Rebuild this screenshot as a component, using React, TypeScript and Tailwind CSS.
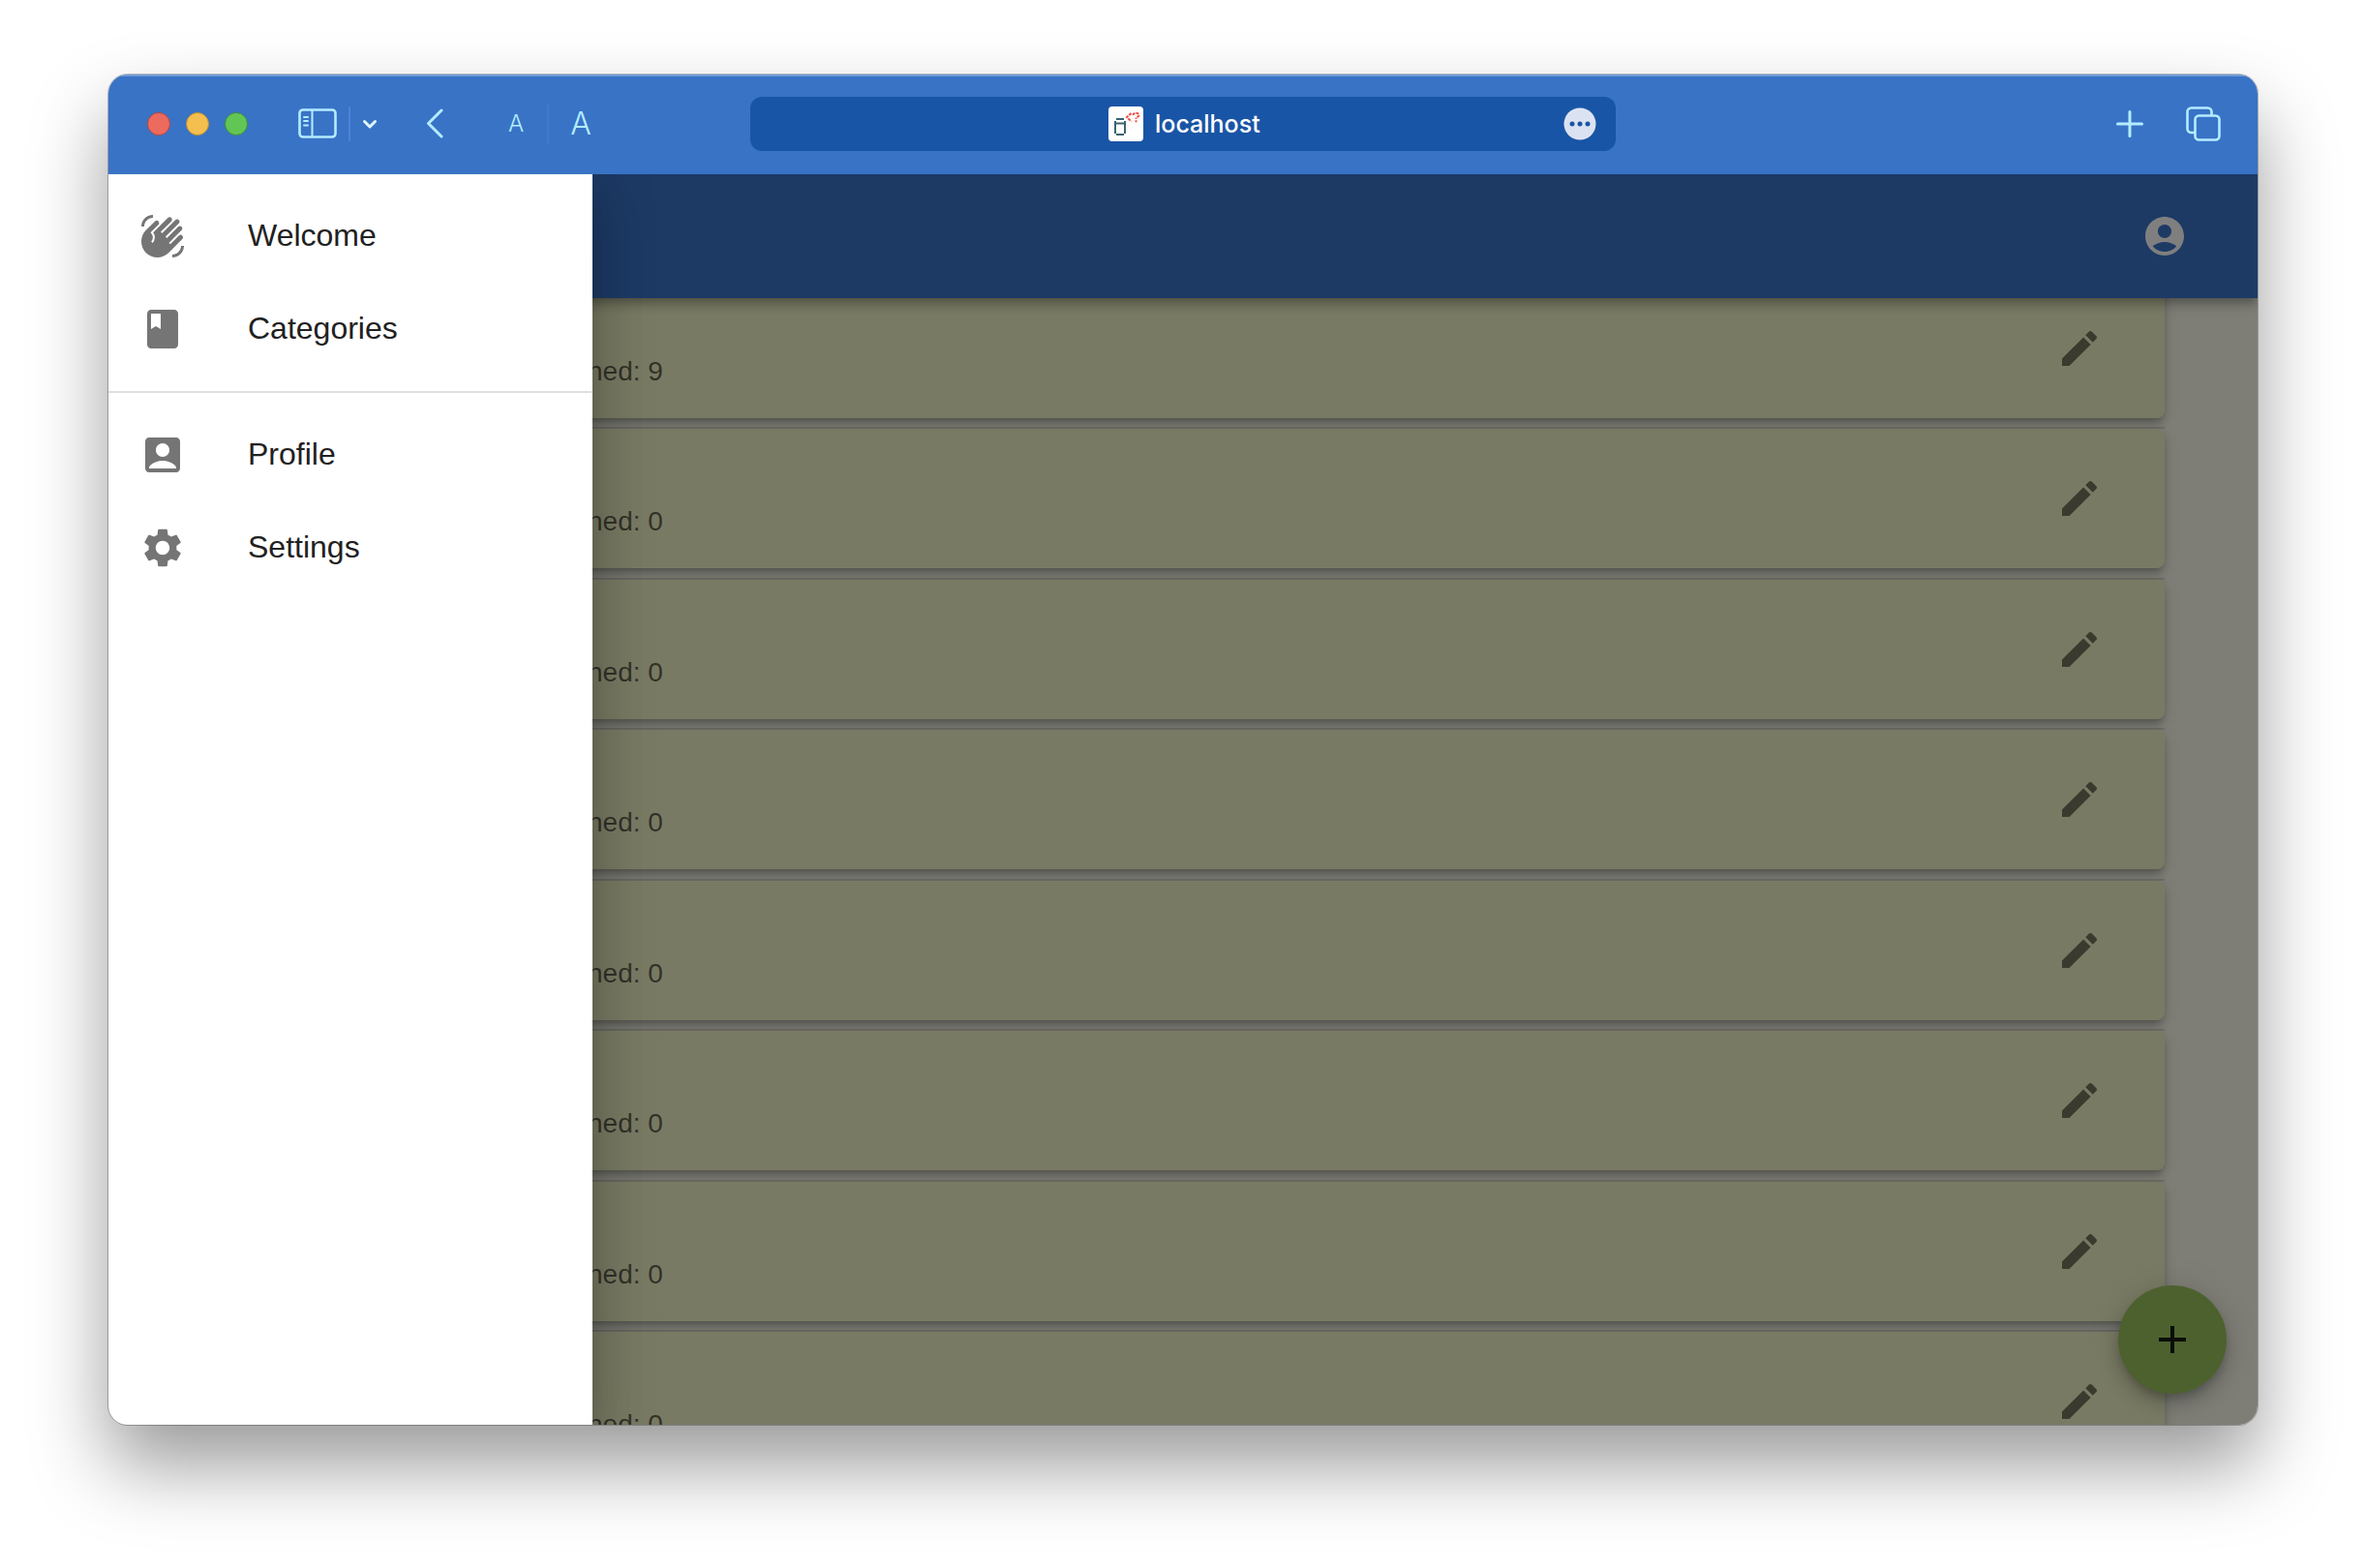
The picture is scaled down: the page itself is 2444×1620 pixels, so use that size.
import type { ReactNode } from "react";
import { MdSettings, MdWavingHand } from "react-icons/md";

function MaterialIcon({ d }: { d: string }) {
  return (
    <svg viewBox="0 0 24 24" className="size-12 shrink-0 fill-current" aria-hidden="true">
      <path d={d} />
    </svg>
  );
}

const BOOK =
  "M18 2H6c-1.1 0-2 .9-2 2v16c0 1.1.9 2 2 2h12c1.1 0 2-.9 2-2V4c0-1.1-.9-2-2-2zM6 4h5v8l-2.5-1.5L6 12V4z";
const ACCOUNT_BOX =
  "M19 3H5c-1.1 0-2 .9-2 2v14c0 1.1.9 2 2 2h14c1.1 0 2-.9 2-2V5c0-1.1-.9-2-2-2zm-7 3c1.93 0 3.5 1.57 3.5 3.5S13.93 13 12 13s-3.5-1.57-3.5-3.5S10.07 6 12 6zm7 13H5v-.23c0-.62.28-1.2.76-1.58C7.47 15.82 9.64 15 12 15s4.53.82 6.24 2.19c.48.38.76.97.76 1.58V19z";
const ACCOUNT_CIRCLE =
  "M12 2C6.48 2 2 6.48 2 12s4.48 10 10 10 10-4.48 10-10S17.52 2 12 2zm0 4c1.93 0 3.5 1.57 3.5 3.5S13.93 13 12 13s-3.5-1.57-3.5-3.5S10.07 6 12 6zm0 14c-2.03 0-4.43-.82-6.14-2.88C7.55 15.8 9.68 15 12 15s4.45.8 6.14 2.12C16.43 19.18 14.03 20 12 20z";
const EDIT =
  "M3 17.25V21h3.75L17.81 9.94l-3.75-3.75L3 17.25zM20.71 7.04c.39-.39.39-1.02 0-1.41l-2.34-2.34c-.39-.39-1.02-.39-1.41 0l-1.83 1.83 3.75 3.75 1.83-1.83z";
const ADD = "M19 13h-6v6h-2v-6H5v-2h6V5h2v6h6v2z";

function BrowserToolbar() {
  return (
    <header className="grid h-[103px] shrink-0 grid-cols-[1fr_minmax(0,894px)_1fr] items-center bg-[#3973c6] pb-0.5 font-['Inter',sans-serif] text-[#b4ecff] shadow-[inset_0_2px_0_#6f9bd8]">
      <div className="flex items-center pl-10">
        <div className="flex gap-4">
          <button aria-label="Close" className="size-6 rounded-full border border-[#b5473f] bg-[#ed6a5f]" />
          <button aria-label="Minimize" className="size-6 rounded-full border border-[#b98d35] bg-[#f5bf4f]" />
          <button aria-label="Zoom" className="size-6 rounded-full border border-[#3f8f38] bg-[#62c655]" />
        </div>
        <button aria-label="Show sidebar" className="ml-[52px]">
          <svg width="40" height="32" viewBox="0 0 40 32" fill="none" stroke="currentColor" strokeWidth="2.6" aria-hidden="true">
            <rect x="1.5" y="1.5" width="37" height="28" rx="3.5" />
            <path d="M14.5 1.5v28" strokeWidth="2" />
            <path d="M6 9h4M6 13h4M6 17.500h4" strokeWidth="2" strokeLinecap="round" />
          </svg>
        </button>
        <span className="ml-3 h-9 w-0.5 bg-[#4d83d2]" />
        <button aria-label="Sidebar options" className="ml-3">
          <svg width="16" height="12" viewBox="0 0 16 12" fill="none" stroke="#e0f7ff" strokeWidth="3" strokeLinecap="round" strokeLinejoin="round" aria-hidden="true">
            <path d="M2.500 3.500l5.500 5.500 5.500-5.500" />
          </svg>
        </button>
        <button aria-label="Back" className="ml-[50px]">
          <svg width="18" height="32" viewBox="0 0 18 32" fill="none" stroke="currentColor" strokeWidth="3" strokeLinecap="round" strokeLinejoin="round" aria-hidden="true">
            <path d="M16 2L2.500 15.500 16 29" />
          </svg>
        </button>
        <button aria-label="Smaller text" className="ml-[67px] text-2xl leading-8 font-light">A</button>
        <span className="ml-6 h-10 w-0.5 bg-[#4479cb]" />
        <button aria-label="Larger text" className="ml-[22px] text-[32px] leading-8 font-light">A</button>
      </div>

      <div className="flex h-14 items-center rounded-xl bg-[#1955a6] px-5">
        <span className="w-10" />
        <label className="flex flex-1 items-center justify-center gap-3">
          <svg width="36" height="36" viewBox="0 0 36 36" fill="none" aria-hidden="true">
            <rect width="36" height="36" rx="4" fill="#fff" />
            <path d="M8 13h8M7 15v13M17 15v13M8 17.500h8M8 29h8" stroke="#3c6470" strokeWidth="2" />
            <path d="M23.500 7l-4.500 4 4.500 4.500" stroke="#ee4b41" strokeWidth="2" strokeDasharray="3 1" />
            <path d="M25.500 9c0-3 6-3 6 0 0 2-3 1.500-3 4M27.500 15.200h2" stroke="#ee4b41" strokeWidth="2" strokeDasharray="3 1" />
          </svg>
          <input
            aria-label="Address"
            defaultValue="localhost"
            className="w-[112px] bg-transparent p-0 text-[25px] leading-9 font-medium text-white outline-none"
          />
        </label>
        <button aria-label="Page options">
          <svg width="34" height="34" viewBox="0 0 34 34" aria-hidden="true">
            <circle cx="17" cy="17" r="16.500" fill="#dbe3f2" />
            <g fill="#1955a6">
              <circle cx="9" cy="17" r="2.500" />
              <circle cx="17" cy="17" r="2.500" />
              <circle cx="25" cy="17" r="2.500" />
            </g>
          </svg>
        </button>
      </div>

      <div className="flex items-center justify-end gap-11 pr-[38px]">
        <button aria-label="New tab">
          <svg width="28" height="28" viewBox="0 0 28 28" fill="none" stroke="currentColor" strokeWidth="3" strokeLinecap="round" aria-hidden="true">
            <path d="M14 1.500v25M1.500 14h25" />
          </svg>
        </button>
        <button aria-label="Show tabs">
          <svg width="36" height="36" viewBox="0 0 36 36" fill="none" stroke="currentColor" strokeWidth="2.600" aria-hidden="true">
            <rect x="9.500" y="9.500" width="25" height="25" rx="4" />
            <path d="M9.500 27H5.500a4 4 0 0 1-4-4V5.500a4 4 0 0 1 4-4H22.500a4 4 0 0 1 4 4V9.500" />
          </svg>
        </button>
      </div>
    </header>
  );
}

function CategoryCard({ learned }: { learned: number }) {
  return (
    <li className="relative flex h-36 shrink-0 items-center rounded-lg bg-[#f2f5c7] pr-16 pl-[343px] shadow-[0_6px_6px_-4px_rgba(0,0,0,0.2),0_6px_8px_rgba(0,0,0,0.14),0_2px_16px_rgba(0,0,0,0.12)] before:absolute before:inset-x-0 before:-top-0.5 before:h-0.5 before:bg-black/12">
      <p className="flex-1 self-end pb-7 text-[28px] leading-10 text-black/60">Learned: {learned}</p>
      <button aria-label="Edit category" className="text-[#74745c]">
        <MaterialIcon d={EDIT} />
      </button>
    </li>
  );
}

function MenuItem({ icon, label }: { icon: ReactNode; label: string }) {
  return (
    <li>
      <a href="#" className="flex h-24 items-center px-8">
        <span className="w-28 text-[#757575]">{icon}</span>
        <span className="pb-0.5 text-[32px] leading-12 text-[#212121]">{label}</span>
      </a>
    </li>
  );
}

const learnedCounts = [9, 0, 0, 0, 0, 0, 0, 0];

export default function App() {
  return (
    <div className="flex h-screen bg-white px-28 pt-[77px] pb-[148px] font-['Liberation_Sans',Arial,sans-serif]">
      <div className="flex min-w-0 flex-1 flex-col overflow-hidden rounded-[20px] shadow-[0_0_0_1px_rgba(0,0,0,0.25),0_42px_80px_rgba(0,0,0,0.4)]">
        <BrowserToolbar />

        <div className="relative flex min-h-0 flex-1 flex-col overflow-hidden bg-[#fcfcee]">
          <div className="z-10 flex h-32 shrink-0 items-center justify-end bg-[#3a74ca] pr-[72px] text-white shadow-[0_4px_8px_-2px_rgba(0,0,0,0.2),0_8px_10px_rgba(0,0,0,0.14),0_2px_20px_rgba(0,0,0,0.12)]">
            <button aria-label="Account">
              <MaterialIcon d={ACCOUNT_CIRCLE} />
            </button>
          </div>

          <main className="min-h-0 flex-1 px-24">
            <ul className="-mt-5 flex h-[1232px] flex-col justify-between">
              {learnedCounts.map((learned, index) => (
                <CategoryCard key={index} learned={learned} />
              ))}
            </ul>
          </main>

          <button
            aria-label="Add category"
            className="absolute right-8 bottom-8 z-10 flex size-28 items-center justify-center rounded-full bg-[#9ac25e] text-black/85 shadow-[0_6px_10px_-2px_rgba(0,0,0,0.2),0_12px_20px_rgba(0,0,0,0.14),0_2px_36px_rgba(0,0,0,0.12)]"
          >
            <MaterialIcon d={ADD} />
          </button>

          <div className="absolute inset-0 z-20 bg-black/50" />

          <nav className="absolute inset-y-0 left-0 z-30 w-[500px] bg-white shadow-[0_16px_20px_-10px_rgba(0,0,0,0.2),0_32px_48px_4px_rgba(0,0,0,0.14),0_12px_60px_10px_rgba(0,0,0,0.12)]">
            <ul className="border-b-2 border-[#e0e0e0] py-4">
              <MenuItem icon={<MdWavingHand className="size-12" />} label="Welcome" />
              <MenuItem icon={<MaterialIcon d={BOOK} />} label="Categories" />
            </ul>
            <ul className="py-4">
              <MenuItem icon={<MaterialIcon d={ACCOUNT_BOX} />} label="Profile" />
              <MenuItem icon={<MdSettings className="size-12" />} label="Settings" />
            </ul>
          </nav>
        </div>
      </div>
    </div>
  );
}
